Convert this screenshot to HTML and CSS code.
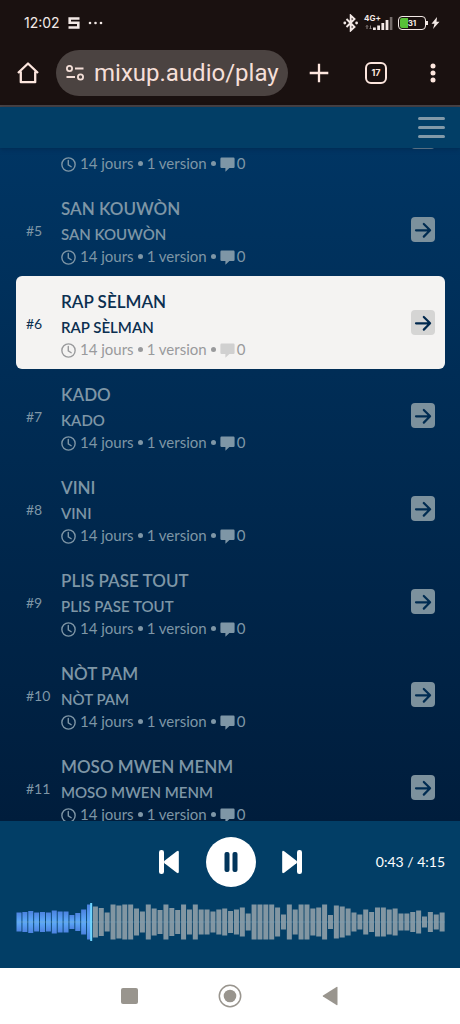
FILE: index.html
```html
<!DOCTYPE html>
<html lang="fr">
<head>
<meta charset="utf-8">
<meta name="viewport" content="width=device-width, initial-scale=1">
<title>Mixup</title>
<link rel="stylesheet" href="styles.css">
</head>
<body>
<svg class="sprite" aria-hidden="true">
  <symbol id="clock" viewBox="0 0 14 14"><path d="M7 .8a6.2 6.2 0 1 0 0 12.4A6.2 6.2 0 0 0 7 .8zM6.8 3.3v4.1l2.7 1.7" fill="none" stroke="currentColor" stroke-width="1.3" stroke-linecap="round"/></symbol>
  <symbol id="comment" viewBox="0 0 15 15"><path d="M1.6 .6h11.8a1.2 1.2 0 0 1 1.2 1.2v7.9a1.2 1.2 0 0 1-1.2 1.2H9.400L5.4 14.800v-3.900H1.6A1.2 1.2 0 0 1 .4 9.700V1.800A1.200 1.200 0 0 1 1.600 .6z" fill="currentColor"/></symbol>
  <symbol id="arrow" viewBox="0 0 24 24"><path d="M5 12.300h14M12.800 6l6.300 6.300-6.300 6.300" fill="none" stroke="currentColor" stroke-width="2.200" stroke-linecap="round" stroke-linejoin="round"/></symbol>
</svg>

<div class="browser">
  <div class="status">
    <div class="status-group">
      <span class="time">12:02</span>
      <svg width="12" height="12" viewBox="0 0 12 12"><path d="M11.500 1.500H1.700V5.800H10.300V10.500H.5" fill="none" stroke="#f3e9e6" stroke-width="2.600"/></svg>
      <svg width="15" height="12" viewBox="0 0 15 12" fill="#f3e9e6"><circle cx="2" cy="6" r="1.300"/><circle cx="7.500" cy="6" r="1.300"/><circle cx="13" cy="6" r="1.300"/></svg>
    </div>
    <div class="status-group right">
      <svg width="16" height="18" viewBox="0 0 16 18"><path d="M3.500 5l8 8L7.700 16.500v-15L11.500 5l-8 8" fill="none" stroke="#f3e9e6" stroke-width="1.900"/><circle cx="1.800" cy="9" r="1.400" fill="#f3e9e6"/><circle cx="13.600" cy="9" r="1.400" fill="#f3e9e6"/></svg>
      <span class="network">
        <span class="network-type">4G+</span>
        <svg width="29" height="13" viewBox="0 0 29 13"><path d="M3 12V8.500M2 9.500l1-1 1 1M6.500 8.500V12M5.500 11l1 1 1-1" stroke="#8e8583" fill="none"/><path d="M9 10.500h2.800V13H9zM13.200 8.500H16V13h-2.800zM17.400 6h2.800v7h-2.800zM21.600 3h2.800v10h-2.800z" fill="#f3e9e6"/><path d="M25.800 0h2.600v13h-2.600z" fill="#756c6a"/></svg>
      </span>
      <span class="battery">31</span>
      <svg width="9" height="12" viewBox="0 0 9 12"><path d="M6 0L.5 6.700h3L2 12l6.500-7.200h-3z" fill="#f3e9e6"/></svg>
    </div>
  </div>
  <div class="toolbar">
    <button class="tool home" aria-label="Accueil"><svg width="24" height="24" viewBox="0 0 24 24"><path d="M2 12L12 2.500 22 12M4.800 10.500v10.700h14.400V10.500" fill="none" stroke="currentColor" stroke-width="2.300" stroke-linejoin="round"/></svg></button>
    <label class="address">
      <svg width="20" height="18" viewBox="0 0 20 18"><g fill="none" stroke="#f3ded7" stroke-width="1.800"><circle cx="4.500" cy="4.500" r="2.600"/><circle cx="15.500" cy="13" r="2.600"/><path d="M10 4.500h8.500M1.500 13h8.500"/></g></svg>
      <input type="text" value="mixup.audio/play" aria-label="Adresse">
    </label>
    <button class="tool" aria-label="Nouvel onglet"><svg width="20" height="20" viewBox="0 0 20 20"><path d="M10 .7v18.600M.7 10h18.600" stroke="currentColor" stroke-width="2.300"/></svg></button>
    <button class="tool" aria-label="Onglets ouverts"><span class="tabs">17</span></button>
    <button class="tool" aria-label="Menu du navigateur"><svg width="6" height="20" viewBox="0 0 6 20" fill="currentColor"><circle cx="3" cy="3" r="2.500"/><circle cx="3" cy="10" r="2.500"/><circle cx="3" cy="17" r="2.500"/></svg></button>
  </div>
</div>

<header class="app-header">
  <button class="menu" aria-label="Menu"><span></span><span></span><span></span></button>
</header>

<main class="tracks">
  <ol class="track-list" id="track-list"></ol>
</main>

<section class="player" aria-label="Lecteur">
  <div class="controls">
    <div class="buttons">
      <button class="skip" aria-label="Piste précédente"><svg width="22" height="24" viewBox="0 0 22 24" fill="currentColor"><rect x="0" y="0" width="5" height="24" rx="2.300"/><path d="M17.800 1.300Q19.800 0 19.800 2.300v19.400q0 2.300-2 1L5.500 13.300q-1.500-1.300 0-2.600z"/></svg></button>
      <button class="pause" aria-label="Pause"><svg width="14" height="20" viewBox="0 0 14 20" fill="currentColor"><rect x=".5" y="0" width="5" height="20" rx="2"/><rect x="8.500" y="0" width="5" height="20" rx="2"/></svg></button>
      <button class="skip" aria-label="Piste suivante"><svg width="22" height="24" viewBox="0 0 22 24" fill="currentColor"><rect x="16" y="0" width="5" height="24" rx="2.300"/><path d="M3.200 1.300Q1.200 0 1.200 2.300v19.400q0 2.300 2 1L15.500 13.300q1.500-1.300 0-2.600z"/></svg></button>
    </div>
    <span class="elapsed">0:43 / 4:15</span>
  </div>
  <svg class="wave" id="wave" viewBox="0 0 428 38" preserveAspectRatio="none" role="img" aria-label="Forme d’onde">
    <defs><linearGradient id="played" x1="0" y1="0" x2="0" y2="1"><stop offset="0" stop-color="#4c82e0"/><stop offset=".5" stop-color="#5dabfa"/><stop offset="1" stop-color="#4c82e0"/></linearGradient></defs>
  </svg>
</section>

<nav class="system-nav">
  <button aria-label="Applications récentes"><svg width="24" height="24" viewBox="0 0 24 24"><rect x="3" y="4" width="17" height="16" rx="2" fill="currentColor"/></svg></button>
  <button aria-label="Écran d’accueil"><svg width="24" height="24" viewBox="0 0 24 24"><circle cx="12" cy="12" r="10.700" fill="none" stroke="currentColor" stroke-width="1.500"/><circle cx="12" cy="12" r="6.300" fill="currentColor"/></svg></button>
  <button aria-label="Retour"><svg width="24" height="24" viewBox="0 0 24 24"><path d="M19.500 3.500v17q0 1-1 .4L5 12.600q-.8-.6 0-1.200L18.500 3q1-.5 1 .5z" fill="currentColor"/></svg></button>
</nav>
<script src="app.js"></script>
</body>
</html>
```
FILE: styles.css
```css
* { box-sizing: border-box; }

body {
  margin: 0;
  height: 100vh;
  display: flex;
  flex-direction: column;
  overflow: hidden;
  background: #001c3b;
  font-family: Lato, "Liberation Sans", sans-serif;
}

button {
  margin: 0;
  padding: 0;
  border: 0;
  background: none;
  color: inherit;
  font: inherit;
  display: flex;
  align-items: center;
  justify-content: center;
}

svg { display: block; flex: none; }
.sprite { display: none; }

.browser {
  flex: none;
  background: #1a1110;
  border-bottom: 2px solid #4a4344;
  color: #fde6de;
  font-family: Roboto, "Liberation Sans", sans-serif;
}

.status {
  height: 46px;
  padding: 0 20px 0 24px;
  display: flex;
  align-items: center;
  justify-content: space-between;
}

.status-group { display: flex; align-items: center; gap: 8px; }
.status-group.right { gap: 5px; }
.time { font: 14px/20px Inter, sans-serif; color: #f3e9e6; }
.network { position: relative; }
.network-type {
  position: absolute;
  left: 0;
  top: -3px;
  font: bold 8px/8px Inter, sans-serif;
  color: #f3e9e6;
}

.battery {
  position: relative;
  width: 28px;
  height: 14px;
  border: 1px solid #f3e9e6;
  border-radius: 4px;
  background: linear-gradient(90deg, #1a1110 1px, #57c137 1px, #57c137 9px, #1a1110 9px);
  box-shadow: inset 0 0 0 1px #1a1110;
  color: #f3e9e6;
  font: bold 8px/12px Inter, sans-serif;
  text-align: center;
}
.battery::after {
  content: "";
  position: absolute;
  right: -3px;
  top: 4px;
  width: 2px;
  height: 4px;
  background: #f3e9e6;
}

.toolbar {
  height: 59px;
  padding: 4px 9px 9px 16px;
  display: flex;
  align-items: center;
}
.tool { width: 36px; height: 46px; margin-left: 21px; }
.tool.home { width: 24px; margin: 0 16px 0 0; }
.address + .tool { margin-left: 13px; }
.address {
  flex: 1;
  min-width: 0;
  height: 46px;
  padding: 0 6px 0 9px;
  display: flex;
  align-items: center;
  gap: 9px;
  border-radius: 23px;
  background: #4b4341;
}
.address input {
  flex: 1;
  min-width: 0;
  padding: 0;
  border: 0;
  outline: 0;
  background: none;
  color: #f5dfd8;
  font: 24px/34px Roboto, sans-serif;
}
.tabs {
  width: 22px;
  height: 22px;
  border: 2px solid #fde6de;
  border-radius: 6px;
  font: bold 9px/18px Inter, sans-serif;
}

.app-header {
  flex: none;
  position: relative;
  z-index: 1;
  height: 41px;
  padding: 0 15px;
  display: flex;
  align-items: center;
  justify-content: flex-end;
  background: #023e66;
  box-shadow: 0 1px 4px #001f4080;
}
.menu { width: 27px; flex-direction: column; gap: 6px; }
.menu span { width: 27px; height: 3px; border-radius: 2px; background: #8299a8; }

.tracks {
  flex: 1;
  min-height: 0;
  overflow: hidden;
  background: linear-gradient(#003563, #001d3c);
}
.track-list { list-style: none; margin: -58px 15px 0 16px; padding: 0; }
.track {
  display: grid;
  grid-template-columns: 35px 1fr 24px;
  align-items: center;
  padding: 13px 10px 11px;
  border-radius: 6px;
  color: #7e96a6;
}
.number { font-size: 14px; line-height: 20px; }
.title, .artist, .meta { margin: 0; }
.title { font-size: 17px; font-weight: 600; line-height: 26px; }
.artist { font-size: 15px; font-weight: 600; line-height: 25px; }
.meta {
  display: flex;
  align-items: center;
  gap: 4px;
  font-size: 15px;
  line-height: 18px;
}
.meta .icon { width: 15px; height: 15px; margin-top: 2px; }
.comments { display: flex; align-items: center; gap: 2px; }
.dot { width: 5px; height: 5px; border-radius: 50%; background: currentColor; }
.open {
  width: 24px;
  height: 25px;
  margin-bottom: 2px;
  border-radius: 4px;
  background: #7c919d;
  color: #002c52;
}
.open svg { width: 24px; height: 24px; }

.track.current { background: #f4f3f2; color: #0b2f50; }
.current .meta { color: #999a9c; }
.current .comments .icon { color: #d0d0d0; }
.current .open { background: #d5d5d4; color: #00284d; }

.player { flex: none; padding: 16px 15px 27px 16px; background: #023e66; color: #fff; }
.controls {
  display: grid;
  grid-template-columns: 1fr auto 1fr;
  align-items: center;
}
.buttons { grid-column: 2; display: flex; align-items: center; gap: 25px; }
.skip { width: 22px; height: 24px; }
.pause { width: 50px; height: 50px; border-radius: 50%; background: #fff; color: #02355b; }
.elapsed { justify-self: end; font-size: 14px; line-height: 20px; }
.wave { width: 100%; height: 38px; margin-top: 16px; }

.bar { fill: #8296a2; }
.bar.played { fill: url(#played); }
.cursor { fill: #6fd6ff; }
.axis { fill: #7fa6bd; opacity: .4; }

.system-nav {
  flex: none;
  height: 56px;
  display: flex;
  align-items: center;
  justify-content: center;
  gap: 76px;
  background: #fff;
  color: #99958e;
}
```
FILE: app.js
```js
const titles = ["", "SAN KOUWÒN", "RAP SÈLMAN", "KADO", "VINI", "PLIS PASE TOUT", "NÒT PAM", "MOSO MWEN MENM"];
const current = 6;

document.getElementById("track-list").innerHTML = titles.map((title, i) => {
  const n = i + 4;
  return `<li class="track${n === current ? " current" : ""}">
    <span class="number">${title ? "#" + n : ""}</span>
    <div>
      <h2 class="title">${title || "&nbsp;"}</h2>
      <p class="artist">${title || "&nbsp;"}</p>
      <p class="meta"><svg class="icon"><use href="#clock"/></svg><span>14 jours</span><i class="dot"></i><span>1 version</span><i class="dot"></i><span class="comments"><svg class="icon"><use href="#comment"/></svg>0</span></p>
    </div>
    <button class="open" aria-label="Ouvrir ${title}"><svg><use href="#arrow"/></svg></button>
  </li>`;
}).join("");

const levels = [
  19, 20, 22, 19, 20, 19, 23, 21, 21, 14, 18, 25, 35, 31, 28, 19, 35, 33, 35, 35,
  27, 21, 35, 27, 24, 35, 28, 24, 35, 25, 35, 25, 25, 21, 25, 27, 22, 25, 29, 17,
  35, 35, 35, 35, 29, 15, 35, 25, 35, 35, 27, 29, 35, 14, 33, 31, 27, 19, 15, 25,
  20, 29, 29, 25, 27, 17, 17, 20, 23, 11, 20, 15, 19
];
const step = 428 / levels.length;
const bars = levels.map((h, i) =>
  `<rect class="bar${i < 13 ? " played" : ""}" x="${i * step + 0.5}" y="${19 - h / 2}" width="5" height="${h}"/>`
).join("");
document.getElementById("wave").innerHTML +=
  bars + '<rect class="axis" x="1" y="18.500" width="427" height="1"/><rect class="cursor" x="74" y="0" width="2" height="38"/>';
```
